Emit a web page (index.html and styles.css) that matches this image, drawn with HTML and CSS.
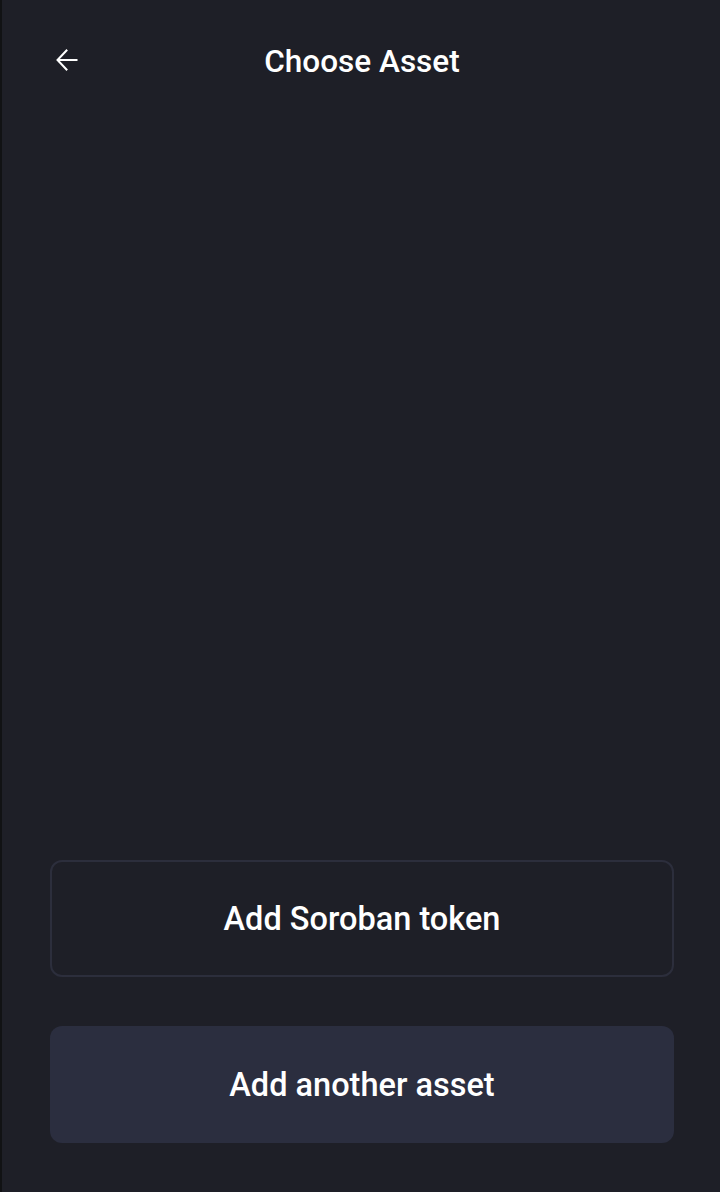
FILE: index.html
```html
<!DOCTYPE html>
<html lang="en">
<head>
<meta charset="utf-8">
<title>Choose Asset</title>
<link rel="stylesheet" href="styles.css">
</head>
<body>
<div class="screen">
  <header class="header">
    <button class="back" aria-label="Back">
      <svg width="24" height="24" viewBox="0 0 24 24" fill="none" stroke="#ffffff" stroke-width="2" stroke-linecap="square" stroke-linejoin="miter">
        <path d="M21.5 12H3.5"/>
        <path d="M11.5 2.5 2.5 12 11.5 21.5"/>
      </svg>
    </button>
    <h1 class="title">Choose Asset</h1>
  </header>
  <main class="content"></main>
  <footer class="actions">
    <button class="btn btn-outline">Add Soroban token</button>
    <button class="btn btn-filled">Add another asset</button>
  </footer>
</div>
</body>
</html>
```
FILE: styles.css
```css
html, body {
  margin: 0;
  padding: 0;
  background: #1e1f27;
}
body {
  font-family: Roboto, "Liberation Sans", sans-serif;
  color: #ffffff;
}
.screen {
  height: 1192px;
  box-sizing: border-box;
  border-left: 2px solid #111214;
  display: flex;
  flex-direction: column;
  padding: 0 46px 49px 48px;
}
.header {
  position: relative;
  height: 122px;
  display: flex;
  align-items: center;
  justify-content: center;
}
.back {
  position: absolute;
  left: 5px;
  top: 48px;
  width: 24px;
  height: 24px;
  padding: 0;
  border: 0;
  background: none;
  display: flex;
}
.title {
  margin: 0;
  font-size: 31.5px;
  font-weight: 500;
  letter-spacing: 0;
  padding-left: 0;
}
.content {
  flex: 1;
}
.actions {
  display: flex;
  flex-direction: column;
  gap: 49px;
}
.btn {
  height: 117px;
  border-radius: 12px;
  font-family: inherit;
  font-size: 32.5px;
  font-weight: 500;
  color: #ffffff;
  cursor: pointer;
}
.btn-outline {
  background: transparent;
  border: 2px solid #2c2e3c;
}
.btn-filled {
  background: #2b2e3f;
  border: 0;
}
```
